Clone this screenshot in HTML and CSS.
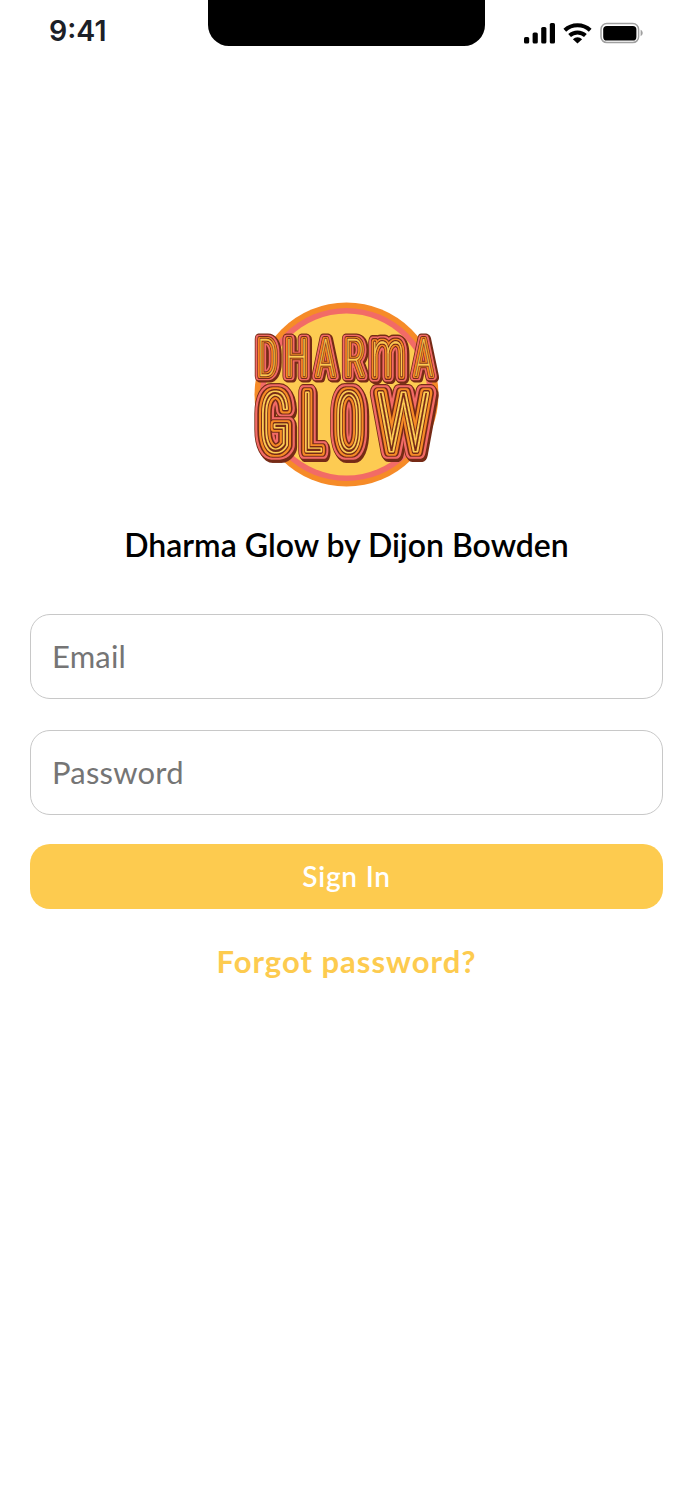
FILE: index.html
```
<!DOCTYPE html>
<html lang="en">
<head>
  <meta charset="UTF-8" />
  <title>Dharma Glow - Sign In</title>
  <link rel="stylesheet" href="styles.css">
</head>
<body>
  <header class="status-bar">
    <span class="time">9:41</span>
    <div class="notch"></div>
    <div class="status-icons">
      <svg width="32" height="22" viewBox="0 0 32 22">
        <rect x="0" y="15" width="5.2" height="6.5" rx="1.6" />
        <rect x="8.6" y="10.5" width="5.2" height="11" rx="1.6" />
        <rect x="17.2" y="5" width="5.2" height="16.5" rx="1.6" />
        <rect x="25.8" y="1" width="5.2" height="20.5" rx="1.6" />
      </svg>
      <svg class="wifi" width="30" height="22" viewBox="0 0 30 22">
        <path d="M1.8 8.2a18.6 18.6 0 0 1 25.4 0M6.6 13.5a11.6 11.6 0 0 1 15.8 0" />
        <path class="dot" d="M9.9 17.2a6.6 6.6 0 0 1 9.2 0L14.5 21.6z" />
      </svg>
      <svg width="44" height="22" viewBox="0 0 44 22">
        <rect class="battery-case" x="1" y="1.6" width="37.6" height="19" rx="5.8" />
        <rect x="3.2" y="3.9" width="33.2" height="14.6" rx="3.6" />
        <path class="battery-tip" d="M40.6 7.8c2.8 1.4 2.8 5 0 6.4z" />
      </svg>
    </div>
  </header>

  <main class="login">
    <svg class="logo" width="185" height="186" viewBox="0 0 185 186" role="img" aria-label="Dharma Glow">
      <defs>
        <!-- widen the condensed letters' strokes sideways -->
        <filter id="grow1" x="-.1" y="-.1" width="1.2" height="1.2"><feMorphology operator="dilate" radius="1 0" /></filter>
        <filter id="grow2" x="-.1" y="-.1" width="1.2" height="1.2"><feMorphology operator="dilate" radius="2 0" /></filter>
        <filter id="grow3" x="-.1" y="-.1" width="1.2" height="1.2"><feMorphology operator="dilate" radius="3 0" /></filter>
        <filter id="grow4" x="-.1" y="-.1" width="1.2" height="1.2"><feMorphology operator="dilate" radius="4 0" /></filter>
        <g id="dharma">
          <text transform="translate(13 74) scale(.66 1)">D</text>
          <text transform="translate(42.5 74) scale(.72 1)">H</text>
          <text transform="translate(71.5 74) scale(.66 1)">A</text>
          <text transform="translate(100.5 74) scale(.68 1)">R</text>
          <text class="wide" transform="translate(134 74) scale(.72 1.25)">m</text>
          <text transform="translate(169.5 74) scale(.66 1)">A</text>
        </g>
        <g id="glow">
          <text transform="translate(21 149) scale(.62 1)">G</text>
          <text transform="translate(58.5 149) scale(.5 1)">L</text>
          <text transform="translate(95 149) scale(.54 1)">O</text>
          <text class="wide" transform="translate(149.5 149) scale(.68 1)">W</text>
        </g>
      </defs>
      <circle cx="92.5" cy="92.5" r="92" fill="#f68b28" />
      <circle cx="92.5" cy="92.5" r="86.5" fill="#f26b66" />
      <circle cx="92.5" cy="92.5" r="81" fill="#fdcb52" />
      <g class="word small">
        <use href="#dharma" class="brown" x="1.5" y="1" stroke-width="11" filter="url(#grow2)" />
        <use href="#dharma" class="brown" stroke-width="11" filter="url(#grow2)" />
        <use href="#dharma" class="pink" stroke-width="8.6" filter="url(#grow2)" />
        <use href="#dharma" class="brown" stroke-width="6.2" filter="url(#grow1)" />
        <use href="#dharma" class="orange" stroke-width="4.2" filter="url(#grow1)" />
        <use href="#dharma" class="brown" stroke-width="2.4" />
        <use href="#dharma" class="yellow" stroke-width=".4" />
      </g>
      <g class="word big">
        <use href="#glow" class="brown" x="1.5" y="1.5" stroke-width="18" filter="url(#grow4)" />
        <use href="#glow" class="brown" stroke-width="18" filter="url(#grow4)" />
        <use href="#glow" class="pink" stroke-width="15.4" filter="url(#grow4)" />
        <use href="#glow" class="brown" stroke-width="11.6" filter="url(#grow3)" />
        <use href="#glow" class="orange" stroke-width="9.6" filter="url(#grow2)" />
        <use href="#glow" class="brown" stroke-width="6" filter="url(#grow1)" />
        <use href="#glow" class="yellow" stroke-width="3" filter="url(#grow1)" />
        <use href="#glow" class="brown" stroke-width=".2" />
      </g>
    </svg>

    <h1>Dharma Glow by Dijon Bowden</h1>

    <form>
      <input class="email" type="email" placeholder="Email" aria-label="Email" />
      <input type="password" placeholder="Password" aria-label="Password" />
      <button type="button">Sign In</button>
    </form>
    <a class="forgot" href="#">Forgot password?</a>
  </main>
</body>
</html>
```
FILE: styles.css
```
* {
  box-sizing: border-box;
}
body {
  margin: 0;
  min-height: 1500px;
  background: #fff;
  font-family: Lato, "Liberation Sans", sans-serif;
}
.status-bar {
  display: grid;
  grid-template-columns: 208px 277px 208px;
  height: 46px;
}
.time {
  padding: 15px 0 0 49px;
  font: 600 28.5px/31px Inter, sans-serif;
  color: #1c2027;
}
.notch {
  background: #000;
  border-radius: 0 0 21px 21px;
}
.status-icons {
  display: flex;
  gap: 7px;
  padding: 22px 0 0 39px;
}
.wifi path {
  fill: none;
  stroke: #000;
  stroke-width: 4;
}
.wifi .dot {
  fill: #000;
  stroke: none;
}
.battery-case {
  fill: none;
  stroke: #a0a0a0;
  stroke-width: 1.5;
}
.battery-tip {
  fill: #a0a0a0;
}
.login {
  display: flex;
  flex-direction: column;
  align-items: center;
  padding: 256px 30px 0;
}
.logo {
  display: block;
}
.word {
  font-family: Roboto, sans-serif;
  font-weight: 100;
  font-stretch: 75%;
  text-anchor: middle;
  stroke-linejoin: round;
}
.wide {
  font-stretch: 100%;
}
.small {
  font-size: 52px;
}
.big {
  font-size: 82px;
}
.brown {
  fill: #762b17;
  stroke: #762b17;
}
.pink {
  fill: #f26b66;
  stroke: #f26b66;
}
.orange {
  fill: #f68b28;
  stroke: #f68b28;
}
.yellow {
  fill: #fdcb52;
  stroke: #fdcb52;
}
h1 {
  margin: 36px 0 48px;
  font-size: 32px;
  line-height: 42px;
  font-weight: 600;
  color: #000;
}
form {
  display: flex;
  flex-direction: column;
  width: 100%;
}
input {
  height: 85px;
  margin-bottom: 29px;
  padding: 0 21px 2px;
  border: 1px solid #c8c8c8;
  border-radius: 20px;
  background: #fff;
  font: 400 31px Lato, sans-serif;
  letter-spacing: .2px;
}
.email {
  margin-bottom: 31px;
}
input::placeholder {
  color: #757575;
}
button {
  height: 65px;
  padding-bottom: 2px;
  border: 0;
  border-radius: 20px;
  background: #fdcb4f;
  color: #fff;
  font: 600 28px Lato, sans-serif;
  letter-spacing: .8px;
}
.forgot {
  margin-top: 31px;
  font-size: 31px;
  line-height: 42px;
  font-weight: 700;
  letter-spacing: 1px;
  color: #fdcb4f;
  text-decoration: none;
}
```
